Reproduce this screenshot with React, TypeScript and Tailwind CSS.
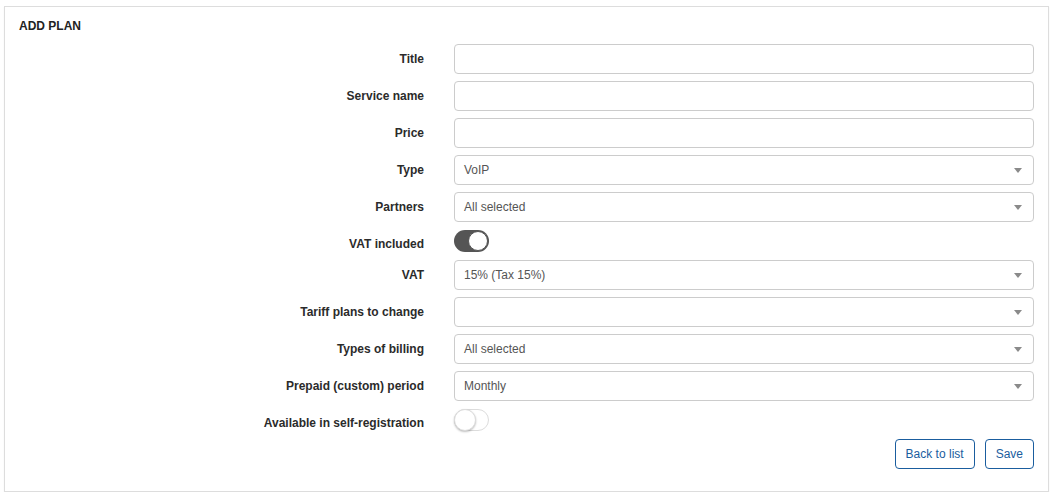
import React from "react";

type Row =
  | { kind: "input"; label: string }
  | { kind: "select"; label: string; value: string }
  | { kind: "toggle"; label: string; on: boolean };

const rows: Row[] = [
  { kind: "input", label: "Title" },
  { kind: "input", label: "Service name" },
  { kind: "input", label: "Price" },
  { kind: "select", label: "Type", value: "VoIP" },
  { kind: "select", label: "Partners", value: "All selected" },
  { kind: "toggle", label: "VAT included", on: true },
  { kind: "select", label: "VAT", value: "15% (Tax 15%)" },
  { kind: "select", label: "Tariff plans to change", value: "" },
  { kind: "select", label: "Types of billing", value: "All selected" },
  { kind: "select", label: "Prepaid (custom) period", value: "Monthly" },
  { kind: "toggle", label: "Available in self-registration", on: false }
];

function Toggle({ on }: { on: boolean }) {
  return on ? (
    <span className="relative block h-[22px] w-[35px] rounded-full bg-[#555555]">
      <span className="absolute right-[1px] top-[1px] h-[20px] w-[20px] rounded-full border border-[#555] bg-white" />
    </span>
  ) : (
    <span className="relative block h-[22px] w-[35px] rounded-full border border-[#dcdcdc] bg-white">
      <span className="absolute left-[-1px] top-[-1px] h-[22px] w-[22px] rounded-full border border-[#dcdcdc] bg-white shadow-[0_1px_2px_rgba(0,0,0,0.25)]" />
    </span>
  );
}

function Field({ row }: { row: Row }) {
  if (row.kind === "toggle") {
    return (
      <div className="flex h-[24px] items-center">
        <Toggle on={row.on} />
      </div>
    );
  }

  return (
    <div className="flex h-[30px] items-center rounded-[4px] border border-[#cccccc] bg-white pl-[9px] pr-[10px] text-[12px] text-[#555555]">
      <span className="flex-1">{row.kind === "select" ? row.value : ""}</span>
      {row.kind === "select" ? (
        <svg width="8" height="5" viewBox="0 0 8 5" className="mr-[1px]">
          <path d="M0 0h8L4 5z" fill="#8a8a8a" />
        </svg>
      ) : null}
    </div>
  );
}

export default function App() {
  return (
    <div
      className="bg-white pl-[4px] pr-[7px] pt-[6px]"
      style={{ fontFamily: "'Liberation Sans', Arial, sans-serif" }}
    >
      <div className="border border-[#dddddd] px-[14px] pb-[22px] pt-[12px] shadow-[0_1px_1px_rgba(0,0,0,0.08)]">
        <h1 className="text-[12px] font-bold uppercase leading-[14px] text-[#222]">
          Add plan
        </h1>

        <div className="mt-[11px] grid grid-cols-[405px_1fr] gap-x-[30px] gap-y-[7px]">
          {rows.map((row) => (
            <React.Fragment key={row.label}>
              {row.kind === "toggle" ? (
                <div className="flex justify-end pt-[8px] text-[12px] font-bold leading-[14px] text-[#2b2b2b]">
                  {row.label}
                </div>
              ) : (
                <div className="flex items-center justify-end text-[12px] font-bold text-[#2b2b2b]">
                  {row.label}
                </div>
              )}
              <Field row={row} />
            </React.Fragment>
          ))}

          <div />
          <div className="flex justify-end gap-[10px]">
            <button
              type="button"
              className="h-[30px] rounded-[4px] border border-[#1a5d9e] bg-white px-[10px] text-[12px] text-[#1a5d9e]"
            >
              Back to list
            </button>
            <button
              type="button"
              className="h-[30px] rounded-[4px] border border-[#1a5d9e] bg-white px-[10px] text-[12px] text-[#1a5d9e]"
            >
              Save
            </button>
          </div>
        </div>
      </div>
    </div>
  );
}
